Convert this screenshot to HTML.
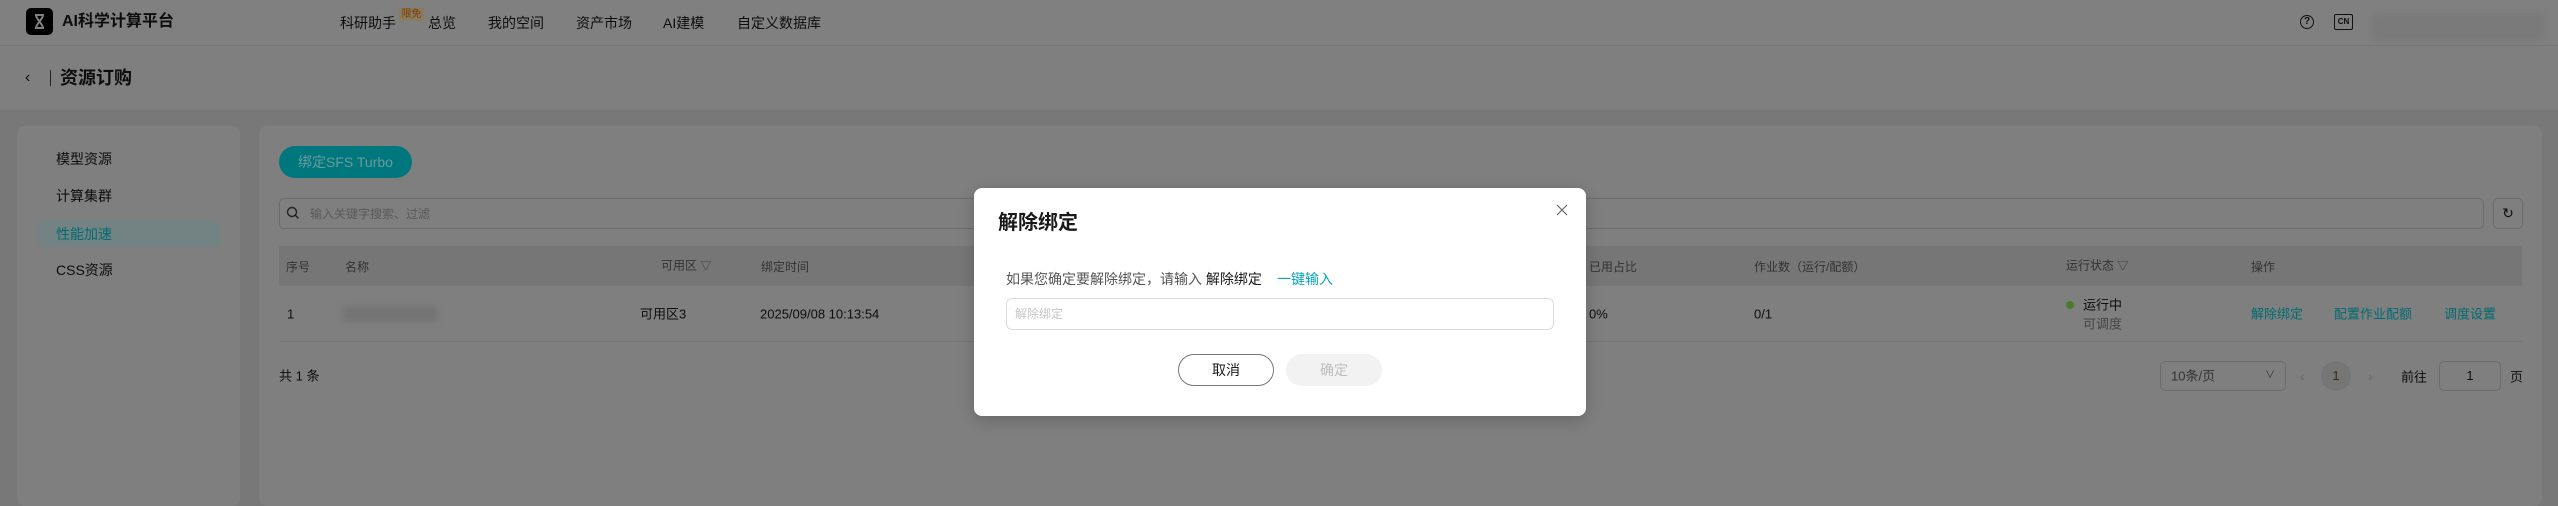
<!DOCTYPE html>
<html><head><meta charset="utf-8"><style>
*{margin:0;padding:0;box-sizing:border-box}
body{width:2558px;height:487px;overflow:hidden;background:#787878;font-family:"Liberation Sans","Noto Sans CJK SC",sans-serif;color:#0d0d0d;position:relative;font-size:14px}
.a{position:absolute;white-space:nowrap}
.hdr{left:0;top:0;width:2558px;height:46px;background:#808080;border-bottom:1px solid #767676}
.sub{left:0;top:46px;width:2558px;height:64px;background:#7f7f7f}
.card{background:#7f7f7f;border-radius:8px}
.t{line-height:1;transform:translateY(-50%)}
.link{color:#006b70}
.mg{color:#333}
</style></head><body>
<div class="a hdr"></div>
<div class="a" style="left:26px;top:8px;width:27px;height:27px;background:#000;border-radius:5px"></div>
<svg class="a" style="left:26px;top:8px" width="27" height="27" viewBox="0 0 27 27"><path d="M9 7h9M9 20h9M10 7c0 4 7 9 7 13M17 7c0 4-7 9-7 13" stroke="#808080" stroke-width="2" fill="none"/></svg>
<div class="a t" style="left:62px;top:22px;font-size:16px;font-weight:bold">AI科学计算平台</div>
<div class="a t" style="left:340px;top:23px">科研助手</div>
<div class="a" style="left:399px;top:8px;width:25px;height:13px;background:#8a7a60;color:#7a3d00;font-size:10px;line-height:13px;text-align:center">限免</div>
<div class="a t" style="left:428px;top:23px">总览</div>
<div class="a t" style="left:488px;top:23px">我的空间</div>
<div class="a t" style="left:576px;top:23px">资产市场</div>
<div class="a t" style="left:663px;top:23px">AI建模</div>
<div class="a t" style="left:737px;top:23px">自定义数据库</div>
<div class="a" style="left:2300px;top:15px;width:14px;height:14px;border:1.5px solid #111;border-radius:50%;font-size:10px;text-align:center;line-height:11px;font-weight:bold">?</div>
<div class="a" style="left:2334px;top:14px;width:19px;height:16px;border:1.5px solid #111;border-radius:2px;font-size:8px;text-align:center;line-height:13px;font-weight:bold">CN</div>
<div class="a" style="left:2371px;top:13px;width:173px;height:28px;background:#7a7a7a;filter:blur(3px)"></div>
<div class="a sub"></div>
<div class="a t" style="left:25px;top:78px;font-size:16px">&lsaquo;</div>
<div class="a" style="left:50px;top:70px;width:1px;height:16px;background:#222"></div>
<div class="a t" style="left:60px;top:78px;font-size:18px;font-weight:bold">资源订购</div>
<div class="a card" style="left:17px;top:126px;width:223px;height:380px"></div>
<div class="a t" style="left:56px;top:159px;font-size:14px">模型资源</div>
<div class="a t" style="left:56px;top:196px">计算集群</div>
<div class="a" style="left:37px;top:220px;width:184px;height:27px;background:#738383;border-radius:5px"></div>
<div class="a t link" style="left:56px;top:234px">性能加速</div>
<div class="a t" style="left:56px;top:270px">CSS资源</div>
<div class="a card" style="left:259px;top:126px;width:2283px;height:380px"></div>
<div class="a" style="left:279px;top:146px;width:133px;height:32px;background:#00777d;border-radius:16px;color:#6a9a9c;font-size:14px;line-height:32px;text-align:center">绑定SFS Turbo</div>
<div class="a" style="left:279px;top:198px;width:2205px;height:31px;border:1px solid #6c6c6c;border-radius:5px"></div>
<svg class="a" style="left:286px;top:206px" width="14" height="14" viewBox="0 0 14 14"><circle cx="6" cy="6" r="4.5" stroke="#222" stroke-width="1.4" fill="none"/><path d="M9.3 9.3L12.5 12.5" stroke="#222" stroke-width="1.4"/></svg>
<div class="a t" style="left:310px;top:214px;font-size:12px;color:#595959">输入关键字搜索、过滤</div>
<div class="a" style="left:2493px;top:198px;width:30px;height:31px;border:1px solid #6c6c6c;border-radius:5px;text-align:center;line-height:29px;font-size:14px">&#8635;</div>
<div class="a" style="left:279px;top:246px;width:2243px;height:40px;background:#767676"></div>
<div class="a t mg" style="left:286px;top:267px;font-size:12px">序号</div>
<div class="a t mg" style="left:345px;top:267px;font-size:12px">名称</div>
<div class="a t mg" style="left:661px;top:266px;font-size:12px">可用区 <span style="font-size:11px">▽</span></div>
<div class="a t mg" style="left:761px;top:267px;font-size:12px">绑定时间</div>
<div class="a t mg" style="left:1589px;top:267px;font-size:12px">已用占比</div>
<div class="a t mg" style="left:1754px;top:267px;font-size:12px">作业数（运行/配额）</div>
<div class="a t mg" style="left:2066px;top:266px;font-size:12px">运行状态 <span style="font-size:11px">▽</span></div>
<div class="a t mg" style="left:2251px;top:267px;font-size:12px">操作</div>
<div class="a" style="left:279px;top:341px;width:2243px;height:1px;background:#747474"></div>
<div class="a t" style="left:287px;top:314px;font-size:13px">1</div>
<div class="a" style="left:343px;top:306px;width:94px;height:16px;background:#747474;filter:blur(3px)"></div>
<div class="a t" style="left:640px;top:314px;font-size:13px">可用区3</div>
<div class="a t" style="left:760px;top:314px;font-size:13px">2025/09/08 10:13:54</div>
<div class="a t" style="left:1589px;top:314px;font-size:13px">0%</div>
<div class="a t" style="left:1754px;top:314px;font-size:13px">0/1</div>
<div class="a" style="left:2066px;top:301px;width:8px;height:8px;border-radius:50%;background:#4c7a2c"></div>
<div class="a t" style="left:2083px;top:305px;font-size:13px">运行中</div>
<div class="a t" style="left:2083px;top:324px;font-size:13px;color:#444">可调度</div>
<div class="a t link" style="left:2251px;top:314px;font-size:13px">解除绑定</div>
<div class="a t link" style="left:2334px;top:314px;font-size:13px">配置作业配额</div>
<div class="a t link" style="left:2444px;top:314px;font-size:13px">调度设置</div>
<div class="a t" style="left:279px;top:376px;font-size:13px">共 1 条</div>
<div class="a" style="left:2160px;top:361px;width:126px;height:30px;border:1px solid #6c6c6c;border-radius:5px"></div>
<div class="a t mg" style="left:2171px;top:376px;font-size:13px">10条/页</div>
<div class="a t mg" style="left:2265px;top:376px;font-size:10px">&#8744;</div>
<div class="a t" style="left:2300px;top:376px;color:#666">&lsaquo;</div>
<div class="a" style="left:2321px;top:361px;width:30px;height:30px;border-radius:50%;background:#767676;text-align:center;line-height:30px;font-size:13px;color:#3a2a1a">1</div>
<div class="a t" style="left:2368px;top:376px;color:#666">&rsaquo;</div>
<div class="a t" style="left:2401px;top:377px;font-size:13px">前往</div>
<div class="a" style="left:2439px;top:361px;width:62px;height:30px;border:1px solid #6c6c6c;border-radius:5px;text-align:center;line-height:28px;font-size:13px">1</div>
<div class="a t" style="left:2510px;top:377px;font-size:13px">页</div>

<div class="a" style="left:974px;top:188px;width:612px;height:228px;background:#fff;border-radius:8px;box-shadow:0 4px 16px rgba(0,0,0,.2)"></div>
<div class="a t" style="left:998px;top:223px;font-size:20px;font-weight:bold;color:#191919">解除绑定</div>
<svg class="a" style="left:1556px;top:204px" width="12" height="12" viewBox="0 0 12 12"><path d="M1 1L11 11M11 1L1 11" stroke="#666" stroke-width="1.2"/></svg>
<div class="a t" style="left:1006px;top:279px;font-size:14px;color:#555">如果您确定要解除绑定，请输入 <span style="color:#191919">解除绑定</span></div>
<div class="a t" style="left:1277px;top:279px;font-size:14px;color:#0aa6b5">一键输入</div>
<div class="a" style="left:1006px;top:298px;width:548px;height:32px;border:1px solid #dcdce0;border-radius:6px"></div>
<div class="a t" style="left:1015px;top:314px;font-size:12px;color:#c6c6c6">解除绑定</div>
<div class="a" style="left:1178px;top:354px;width:96px;height:32px;border:1px solid #777;border-radius:16px;text-align:center;line-height:30px;font-size:14px;color:#191919">取消</div>
<div class="a" style="left:1286px;top:354px;width:96px;height:32px;background:#f2f2f2;border-radius:16px;text-align:center;line-height:32px;font-size:14px;color:#bdbdbd">确定</div>
</body></html>
